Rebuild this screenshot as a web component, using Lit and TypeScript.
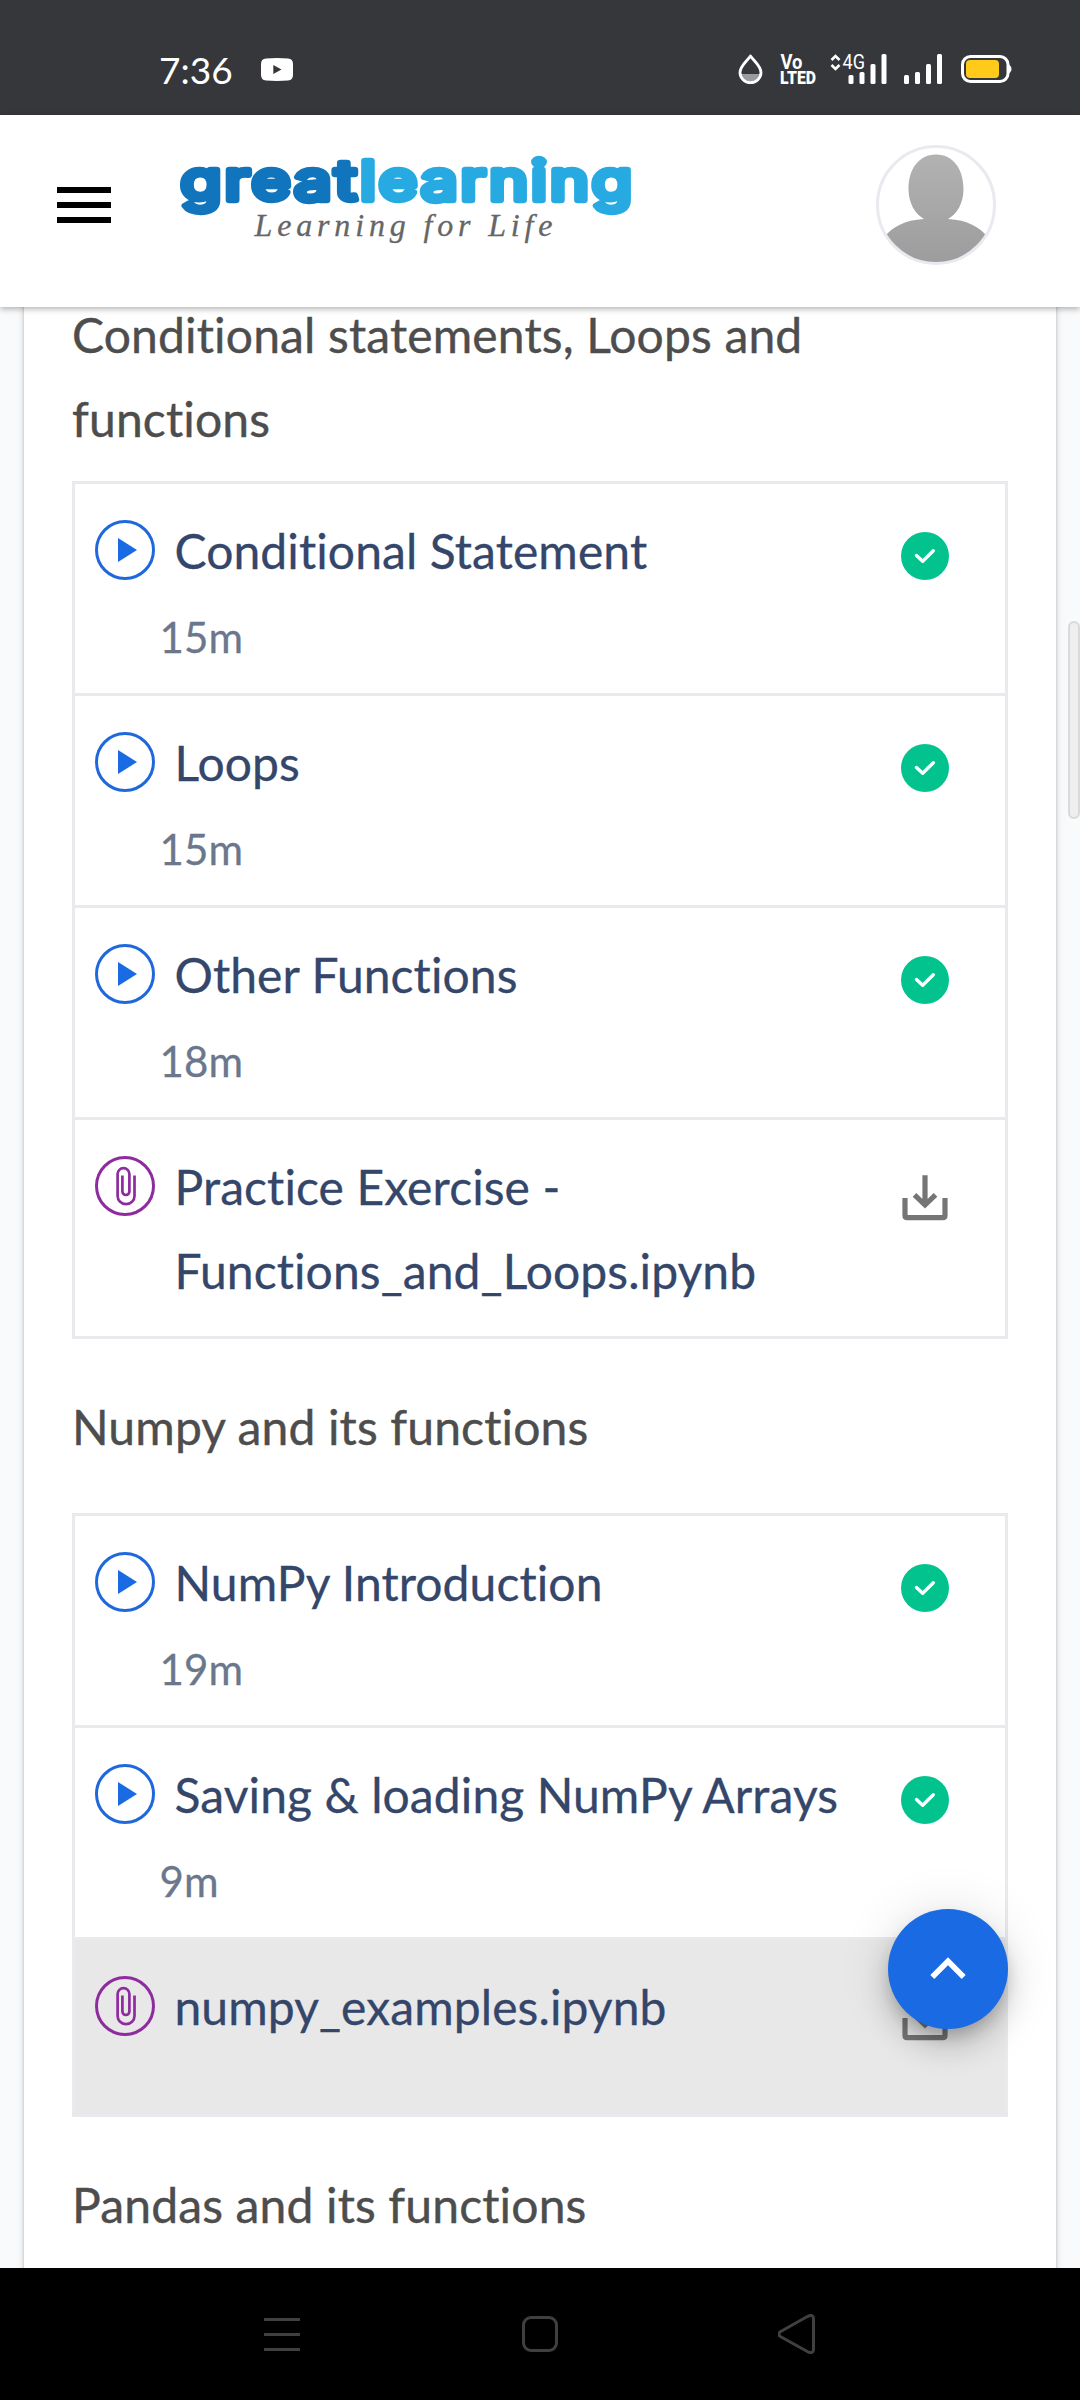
import { LitElement, html, svg, css, nothing } from "lit";
import { customElement, property } from "lit/decorators.js";
import { classMap } from "lit/directives/class-map.js";

interface Lesson {
  title: string;
  kind: "video" | "file";
  duration?: string;
  active?: boolean;
}

interface Section {
  heading: string;
  lessons: Lesson[];
}

const SECTIONS: Section[] = [
  {
    heading: "Conditional statements, Loops and functions",
    lessons: [
      { title: "Conditional Statement", kind: "video", duration: "15m" },
      { title: "Loops", kind: "video", duration: "15m" },
      { title: "Other Functions", kind: "video", duration: "18m" },
      { title: "Practice Exercise - Functions_and_Loops.ipynb", kind: "file" },
    ],
  },
  {
    heading: "Numpy and its functions",
    lessons: [
      { title: "NumPy Introduction", kind: "video", duration: "19m" },
      { title: "Saving & loading NumPy Arrays", kind: "video", duration: "9m" },
      { title: "numpy_examples.ipynb", kind: "file", active: true },
    ],
  },
  { heading: "Pandas and its functions", lessons: [] },
];

@customElement("status-bar")
export class StatusBar extends LitElement {
  static styles = css`
    :host {
      display: block;
      flex: none;
      height: 115px;
      background: #36373b;
      color: #fff;
    }
    .bar {
      display: flex;
      align-items: flex-start;
      padding: 50px 68px 0 159px;
    }
    .time {
      font: 400 37px/40px Lato, sans-serif;
      width: 73px;
      white-space: nowrap;
    }
    svg {
      display: block;
      flex: none;
    }
    .video {
      margin: 8px 0 0 29px;
    }
    .right {
      display: flex;
      margin-left: auto;
    }
    .volte {
      margin-left: 17px;
      overflow: visible;
    }
    .signal {
      margin-left: 13px;
    }
    .signal2 {
      margin-left: 17px;
    }
    .battery {
      margin-left: 18px;
    }
    text {
      font-family: Roboto, sans-serif;
      fill: #fff;
    }
  `;

  render() {
    const bars = svg`
      <rect x="0" y="25" width="5" height="9" rx="1.5" />
      <rect x="11" y="22" width="5" height="12" rx="1.5" />
      <rect x="22" y="14" width="5" height="20" rx="1.5" />
      <rect x="33" y="4" width="5" height="30" rx="1.5" />`;
    return html`
      <div class="bar">
        <span class="time">7:36</span>
        <svg class="video" width="32" height="23" viewBox="0 0 32 23">
          <path fill="#fff" d="M5 .6Q16-.4 27 .6Q32 1 32 6V17Q32 22 27 22.5Q16 23.4 5 22.5Q0 22 0 17V6Q0 1 5 .6Z" />
          <path fill="#36373b" d="M12.3 7L20.5 11.5L12.3 16Z" />
        </svg>
        <div class="right">
          <svg width="25" height="40" viewBox="0 0 25 40">
            <path fill="#9b9b9d" d="M2.5 24H22.5Q21 32.500 12.500 32.500Q4 32.500 2.500 24Z" />
            <path fill="none" stroke="#fff" stroke-width="2.8" stroke-linejoin="round" d="M12.500 6C9 11 2 16 2 22.500A10.400 10 0 0 0 23 22.500C23 16 16 11 12.500 6Z" />
          </svg>
          <svg class="volte" width="36" height="40" viewBox="0 0 36 40">
            <text x="0.500" y="18.700" font-size="20" font-weight="700" textLength="22" lengthAdjust="spacingAndGlyphs">Vo</text>
            <text x="0" y="34" font-size="19" font-weight="900" textLength="36" lengthAdjust="spacingAndGlyphs">LTED</text>
          </svg>
          <svg class="signal" width="58" height="40" viewBox="0 0 58 40">
            <path fill="none" stroke="#fff" stroke-width="2.600" d="M2.500 10L6.500 6L10.500 10M2.500 15L6.500 19L10.500 15" />
            <text x="13.500" y="19" font-size="21" textLength="22.500" lengthAdjust="spacingAndGlyphs">4G</text>
            <g fill="#fff" transform="translate(19.500 0)">${bars}</g>
          </svg>
          <svg class="signal2" width="38" height="40" viewBox="0 0 38 40">
            <g fill="#fff">${bars}</g>
          </svg>
          <svg class="battery" width="52" height="40" viewBox="0 0 52 40">
            <rect x="2.500" y="6.500" width="45.500" height="25" rx="8" fill="none" stroke="#fff" stroke-width="3" />
            <path fill="#fff" d="M48 14Q51.500 16 51.500 19Q51.500 22 48 24Z" />
            <rect x="6" y="10" width="33" height="18" rx="4" fill="#ffca1a" />
          </svg>
        </div>
      </div>
    `;
  }
}

@customElement("site-header")
export class SiteHeader extends LitElement {
  static styles = css`
    :host {
      display: block;
      flex: none;
      height: 192px;
      background: #fff;
      box-shadow: 0 2px 6px rgba(0, 0, 0, 0.3);
      z-index: 2;
    }
    .row {
      display: flex;
      align-items: flex-start;
      padding: 30px 84px 0 57px;
    }
    svg {
      display: block;
      flex: none;
    }
    .menu {
      margin-top: 42px;
    }
    .logo {
      margin-left: 69px;
      overflow: visible;
    }
    .avatar {
      margin-left: auto;
    }
    .word {
      font-family: Inter, "Liberation Sans", sans-serif;
      font-weight: 400;
      font-size: 54px;
      letter-spacing: 2.4px;
      stroke-width: 6.4px;
      stroke-linejoin: round;
      stroke-linecap: round;
    }
    .dark {
      fill: #1075bc;
      stroke: #1075bc;
    }
    .light {
      fill: #27aae1;
      stroke: #27aae1;
    }
    .tag {
      font-family: "Liberation Serif", serif;
      font-style: italic;
      font-size: 32px;
      fill: #666;
      stroke: #666;
      stroke-width: 0.3px;
    }
  `;

  render() {
    return html`
      <div class="row">
        <svg class="menu" width="54" height="36" viewBox="0 0 54 36">
          <path d="M0 0H54V6H0ZM0 15H54V21H0ZM0 30H54V36H0Z" />
        </svg>
        <svg class="logo" width="455" height="112" viewBox="0 0 455 112">
          <text class="word dark" x="0.500" y="55" textLength="179" lengthAdjust="spacingAndGlyphs">great</text>
          <text class="word light" x="180" y="55" textLength="275" lengthAdjust="spacingAndGlyphs">learning</text>
          <text class="tag" x="74.500" y="91" textLength="298">Learning for Life</text>
        </svg>
        <svg class="avatar" width="120" height="120" viewBox="0 0 120 120">
          <defs>
            <linearGradient id="tone" x1="0" y1="0" x2="0" y2="120" gradientUnits="userSpaceOnUse">
              <stop offset="0" stop-color="#b4b4b4" />
              <stop offset="1" stop-color="#9c9c9c" />
            </linearGradient>
            <clipPath id="disc"><circle cx="60" cy="60" r="58" /></clipPath>
          </defs>
          <g clip-path="url(#disc)" fill="url(#tone)">
            <path d="M60 9.500C78 9.500 87.500 25 87.500 44C87.500 58 81 69 72 74C92 75 103 82 112 92V120H8V92C17 82 28 75 48 74C39 69 32.500 58 32.500 44C32.500 25 42 9.500 60 9.500Z" />
          </g>
          <circle cx="60" cy="60" r="58.500" fill="none" stroke="#e9eaef" stroke-width="3" />
        </svg>
      </div>
    `;
  }
}

@customElement("lesson-row")
export class LessonRow extends LitElement {
  @property({ attribute: false }) lesson!: Lesson;

  static styles = css`
    :host {
      display: block;
    }
    .row {
      display: flex;
      align-items: flex-start;
      box-sizing: border-box;
      min-height: 174px;
      padding: 24px 56px 24px 20px;
    }
    .timed {
      height: 209px;
      padding-bottom: 0;
    }
    .active {
      background: #e8e8e8;
    }
    svg {
      display: block;
      flex: none;
    }
    .kind {
      margin-top: 12px;
    }
    .body {
      flex: 1;
      min-width: 0;
      margin: 1px 0 -1px;
      padding: 0 40px 0 19.500px;
    }
    .title {
      font-size: 48px;
      line-height: 84px;
      letter-spacing: 0.09px;
      color: #34466a;
      -webkit-text-stroke: 0.3px #34466a;
    }
    .duration {
      margin: 2px 0 0 -15px;
      font-size: 42px;
      line-height: 84px;
      letter-spacing: 0.09px;
      color: #6b778c;
      -webkit-text-stroke: 0.3px #6b778c;
    }
    .done {
      margin-top: 24px;
    }
    .download {
      margin-top: 28px;
    }
  `;

  private kindIcon() {
    return this.lesson.kind === "video"
      ? html`<svg class="kind" width="60" height="60" viewBox="0 0 60 60">
          <circle cx="30" cy="30" r="28.500" fill="none" stroke="#1f68dc" stroke-width="3" />
          <path fill="#1a6ae4" d="M23 18L42 30L23 42Z" />
        </svg>`
      : html`<svg class="kind" width="60" height="60" viewBox="0 0 60 60" fill="none" stroke="#8e2b9f">
          <circle cx="30" cy="30" r="28.500" stroke-width="3" />
          <path
            stroke-width="2.700"
            d="M39.500 19.500V40A8.450 8.200 0 0 1 22.600 40V18A5.900 5.800 0 0 1 34.400 18V35.500A3.500 3.500 0 0 1 27.400 35.500V19.500"
          />
        </svg>`;
  }

  private stateIcon() {
    return this.lesson.kind === "video"
      ? html`<svg class="done" width="48" height="48" viewBox="0 0 48 48">
          <circle cx="24" cy="24" r="24" fill="#02c38e" />
          <path fill="none" stroke="#fff" stroke-width="3.400" stroke-linecap="round" stroke-linejoin="round" d="M15.500 23.500L21.700 29.200L32.300 18.700" />
        </svg>`
      : html`<svg class="download" width="48" height="50" viewBox="0 0 48 50" fill="none" stroke="#757575" stroke-width="5.200">
          <path d="M24 3.300V32M13.500 22.800L24 33L34.500 22.800" />
          <path d="M4 26V43.500Q4 45.700 6.200 45.700H41.800Q44 45.700 44 43.500V26" />
        </svg>`;
  }

  render() {
    const { title, duration, active } = this.lesson;
    return html`
      <div class=${classMap({ row: true, timed: !!duration, active: !!active })}>
        ${this.kindIcon()}
        <div class="body">
          <div class="title">${title}</div>
          ${duration ? html`<div class="duration">${duration}</div>` : nothing}
        </div>
        ${this.stateIcon()}
      </div>
    `;
  }
}

@customElement("system-nav")
export class SystemNav extends LitElement {
  static styles = css`
    :host {
      display: block;
      flex: none;
      height: 132px;
      background: #000;
      z-index: 3;
    }
    .keys {
      display: flex;
      align-items: center;
      gap: 219px;
      height: 132px;
      padding-left: 262px;
    }
    svg {
      display: block;
      flex: none;
    }
  `;

  render() {
    return html`
      <div class="keys">
        <svg width="39" height="40" viewBox="0 0 39 40">
          <path fill="#404040" d="M2 4H38V7H2ZM2 19H38V22H2ZM2 34H38V37H2Z" />
        </svg>
        <svg width="39" height="40" viewBox="0 0 39 40">
          <rect x="3.500" y="3.500" width="33" height="33" rx="7.500" fill="none" stroke="#404040" stroke-width="3" />
        </svg>
        <svg width="39" height="40" viewBox="0 0 39 40">
          <path fill="none" stroke="#404040" stroke-width="3" stroke-linejoin="round" d="M29.800 2.300Q35.500-.2 35.500 5V35.500Q35.500 40.200 29.800 37.800L2.300 22.500Q-.7 20 2.300 17.700Z" />
        </svg>
      </div>
    `;
  }
}

@customElement("app-root")
export class AppRoot extends LitElement {
  static styles = css`
    :host {
      display: flex;
      flex-direction: column;
      position: relative;
      width: 1080px;
      height: 2400px;
      overflow: hidden;
      background: #f8fafc;
      font-family: Lato, Carlito, sans-serif;
    }
    .viewport {
      flex: 1;
      min-height: 0;
      overflow: hidden;
      padding: 0 24px;
      position: relative;
    }
    .card {
      box-sizing: border-box;
      height: 2100px;
      margin-top: -60px;
      padding: 46px 48px 0;
      background: #fff;
      box-shadow: 0 3px 9px rgba(0, 0, 0, 0.12), 0 0 3px rgba(0, 0, 0, 0.22);
    }
    .heading {
      margin: 0;
      font-size: 48px;
      font-weight: 400;
      line-height: 84px;
      letter-spacing: 0.15px;
      color: #4d4d4d;
      -webkit-text-stroke: 0.4px #4d4d4d;
    }
    .section {
      padding-bottom: 46px;
    }
    .list {
      margin-top: 44px;
      border: 3px solid #e9eaee;
    }
    .first {
      margin-top: 20px;
    }
    .item + .item {
      display: block;
      border-top: 3px solid #e9eaee;
    }
    .top {
      position: absolute;
      right: 72px;
      top: 1602px;
      display: flex;
      width: 120px;
      height: 120px;
      border-radius: 50%;
      background: #1a6ae4;
      box-shadow: 0 9px 15px -3px rgba(0, 0, 0, 0.2), 0 18px 30px rgba(0, 0, 0, 0.14),
        0 3px 54px rgba(0, 0, 0, 0.12);
    }
    .thumb {
      position: absolute;
      right: 0;
      top: 314px;
      box-sizing: border-box;
      width: 12px;
      height: 198px;
      border: 2px solid #d9dada;
      border-radius: 6px;
      background: #efefef;
    }
  `;

  render() {
    return html`
      <status-bar></status-bar>
      <site-header></site-header>
      <main class="viewport">
        <div class="card">
          ${SECTIONS.map(
            (s, i) => html`
              <section class="section">
                <h2 class="heading">${s.heading}</h2>
                ${s.lessons.length
                  ? html`<div class=${classMap({ list: true, first: i === 0 })}>
                      ${s.lessons.map((l) => html`<lesson-row class="item" .lesson=${l}></lesson-row>`)}
                    </div>`
                  : nothing}
              </section>
            `,
          )}
        </div>
        <div class="thumb"></div>
        <div class="top">
          <svg width="120" height="120" viewBox="0 0 120 120">
            <path fill="none" stroke="#fff" stroke-width="5.600" d="M44.300 68L60 52.200L75.700 68" />
          </svg>
        </div>
      </main>
      <system-nav></system-nav>
    `;
  }
}
